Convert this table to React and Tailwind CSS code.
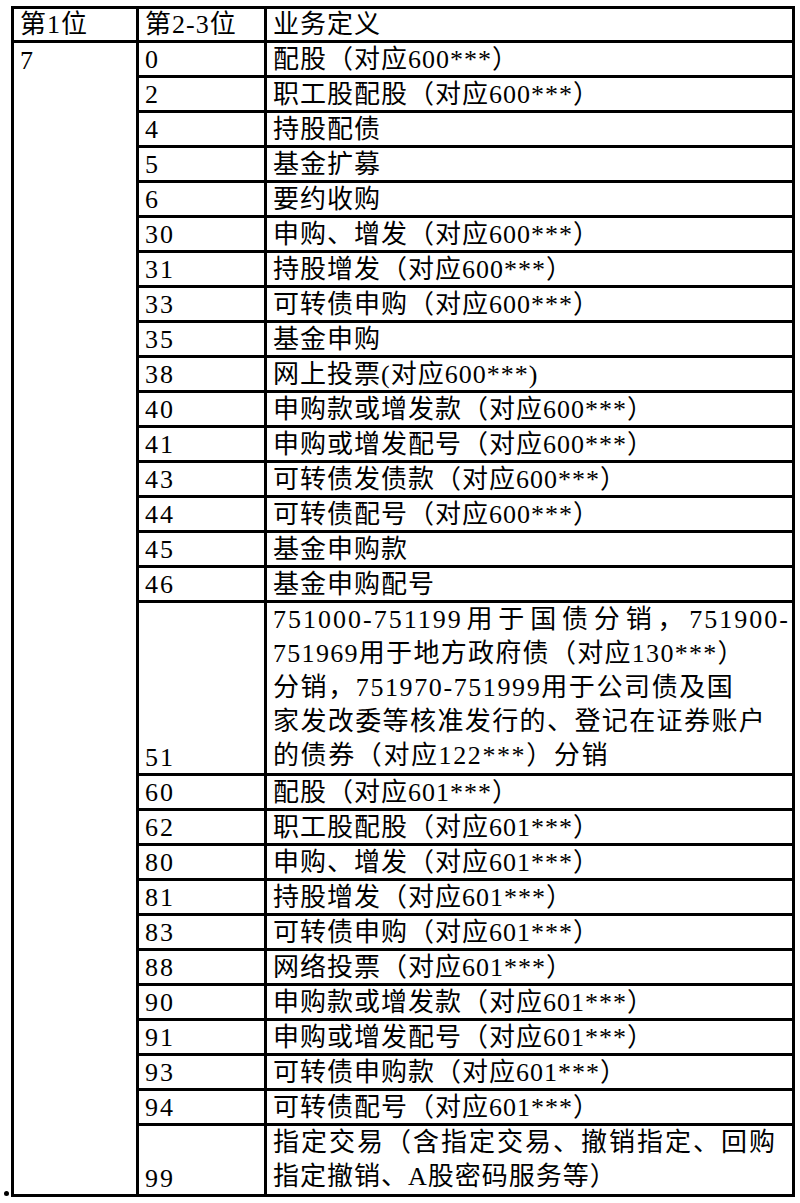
import React from 'react'

const rowsA = [
    ['0', '配股（对应600***）'],
    ['2', '职工股配股（对应600***）'],
    ['4', '持股配债'],
    ['5', '基金扩募'],
    ['6', '要约收购'],
    ['30', '申购、增发（对应600***）'],
    ['31', '持股增发（对应600***）'],
    ['33', '可转债申购（对应600***）'],
    ['35', '基金申购'],
    ['38', '网上投票(对应600***)'],
    ['40', '申购款或增发款（对应600***）'],
    ['41', '申购或增发配号（对应600***）'],
    ['43', '可转债发债款（对应600***）'],
    ['44', '可转债配号（对应600***）'],
    ['45', '基金申购款'],
    ['46', '基金申购配号'],
]

const rowsB = [
    ['60', '配股（对应601***）'],
    ['62', '职工股配股（对应601***）'],
    ['80', '申购、增发（对应601***）'],
    ['81', '持股增发（对应601***）'],
    ['83', '可转债申购（对应601***）'],
    ['88', '网络投票（对应601***）'],
    ['90', '申购款或增发款（对应601***）'],
    ['91', '申购或增发配号（对应601***）'],
    ['93', '可转债申购款（对应601***）'],
    ['94', '可转债配号（对应601***）'],
]

const cell = 'border-[3px] border-black px-[6px] pb-0 pt-0 align-bottom leading-[30px] whitespace-nowrap'
const code = cell + ' tracking-[2px]'

function Row({ no, text }) {
    return (
        <tr className="h-[35px]">
            <td className={code}>{no}</td>
            <td className={cell}>{text}</td>
        </tr>
    )
}

export default function App() {
    return (
        <div className="bg-white w-[800px] h-[1203px] text-black text-[26px] tracking-[1px] font-['Liberation_Serif','Noto_Sans_CJK_SC',serif]">
            <div className="flex items-end pt-[6px] pl-[4px]">
                <div className="w-[5px] h-[5px] rounded-full bg-black mr-[2px] mb-[1px] shrink-0" />
                <table className="table-fixed border-collapse w-[781px]">
                    <colgroup>
                        <col className="w-[125px]" />
                        <col className="w-[128px]" />
                        <col className="w-[528px]" />
                    </colgroup>
                    <tbody>
                        <tr className="h-[34px]">
                            <td className={cell}>第1位</td>
                            <td className={cell}>第2-3位</td>
                            <td className={cell}>业务定义</td>
                        </tr>
                        <tr className="h-[35px]">
                            <td rowSpan={29} className="border-[3px] border-black px-[6px] pt-[3px] align-top leading-[30px]">7</td>
                            <td className={code}>0</td>
                            <td className={cell}>配股（对应600***）</td>
                        </tr>
                        {rowsA.slice(1).map(([no, text]) => <Row key={no} no={no} text={text} />)}
                        <tr className="h-[170px]">
                            <td className={code}>51</td>
                            <td className="border-[3px] border-black pl-[6px] pr-[2px] pb-0 align-bottom leading-[34px] whitespace-nowrap">
                                <div className="tracking-[2px] [text-align-last:justify]">751000-751199用于国债分销，751900-</div>
                                <div className="tracking-[1.3px]">751969用于地方政府债（对应130***）</div>
                                <div className="tracking-[1.6px]">分销，751970-751999用于公司债及国</div>
                                <div className="tracking-[1.4px]">家发改委等核准发行的、登记在证券账户</div>
                                <div className="tracking-[1.6px]">的债券（对应122***）分销</div>
                            </td>
                        </tr>
                        {rowsB.map(([no, text]) => <Row key={no} no={no} text={text} />)}
                        <tr className="h-[71px]">
                            <td className={code}>99</td>
                            <td className="border-[3px] border-black px-[6px] pb-0 align-bottom leading-[34px] whitespace-nowrap">
                                <div className="tracking-[2px]">指定交易（含指定交易、撤销指定、回购</div>
                                <div className="tracking-[1px]">指定撤销、A股密码服务等）</div>
                            </td>
                        </tr>
                    </tbody>
                </table>
            </div>
        </div>
    )
}
